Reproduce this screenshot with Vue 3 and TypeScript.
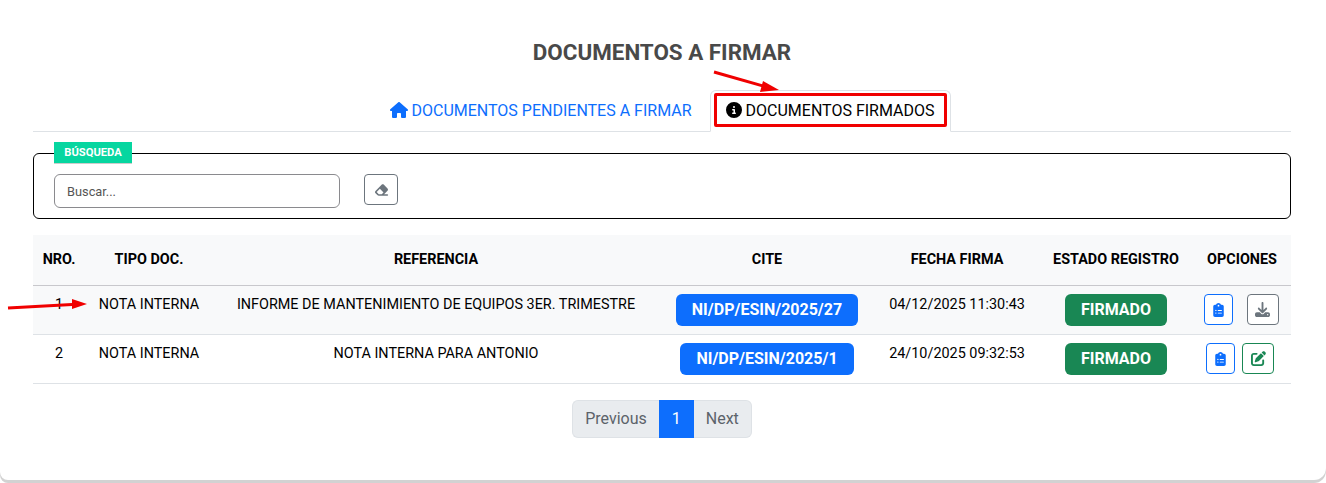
<template>
  <div class="page">
    <main class="card">
      <h1 class="title">DOCUMENTOS A FIRMAR</h1>

      <nav class="tabs">
        <a class="tab">
          <svg class="tab-icon" viewBox="0 0 576 512"><path fill="currentColor" d="M575.8 255.5c0 18-15 32.1-32 32.1h-32l.7 160.2c0 2.7-.2 5.4-.5 8.1V472c0 22.1-17.9 40-40 40H456c-1.1 0-2.2 0-3.3-.1c-1.4 .1-2.8 .1-4.2 .1H416 392c-22.1 0-40-17.9-40-40V448 384c0-17.7-14.3-32-32-32H256c-17.7 0-32 14.3-32 32v64 24c0 22.1-17.9 40-40 40H160 128.1c-1.5 0-3-.1-4.5-.2c-1.2 .1-2.4 .2-3.6 .2H104c-22.1 0-40-17.9-40-40V360c0-.9 0-1.9 .1-2.8V287.6H32c-18 0-32-14-32-32.1c0-9 3-17 10-24L266.4 8c7-7 15-8 22-8s15 2 21 7L564.8 231.5c8 7 12 15 11 24z" /></svg>
          DOCUMENTOS PENDIENTES A FIRMAR
        </a>
        <a class="tab active">
          <span class="tab-mark">
            <svg class="tab-icon info" viewBox="0 0 512 512"><path fill="currentColor" d="M256 512A256 256 0 1 0 256 0a256 256 0 1 0 0 512zM216 336h24V272H216c-13.300 0-24-10.700-24-24s10.700-24 24-24h48c13.300 0 24 10.700 24 24v88h8c13.300 0 24 10.700 24 24s-10.700 24-24 24H216c-13.300 0-24-10.700-24-24s10.700-24 24-24zm40-208a32 32 0 1 1 0 64 32 32 0 1 1 0-64z" /></svg>
            DOCUMENTOS FIRMADOS
          </span>
        </a>
      </nav>

      <fieldset class="search">
        <legend class="search-label">BÚSQUEDA</legend>
        <input class="search-input" type="text" placeholder="Buscar..." />
        <button class="btn btn-clear" type="button">
          <svg viewBox="0 0 576 512" width="15" height="14"><path fill="currentColor" d="M290.700 57.400L57.400 290.700c-25 25-25 65.500 0 90.500l80 80c12 12 28.300 18.700 45.300 18.700H288h9.400H512c17.700 0 32-14.300 32-32s-14.300-32-32-32H387.900L518.600 285.300c25-25 25-65.500 0-90.500L381.300 57.400c-25-25-65.500-25-90.500 0zM297.400 416H288l-105.400 0-80-80L227.300 211.300 364.700 348.700 297.400 416z" /></svg>
        </button>
      </fieldset>

      <table class="docs">
        <colgroup>
          <col v-for="w in colWidths" :key="w" :style="{ width: w + 'px' }" />
        </colgroup>
        <thead>
          <tr>
            <th>NRO.</th>
            <th>TIPO DOC.</th>
            <th>REFERENCIA</th>
            <th>CITE</th>
            <th>FECHA FIRMA</th>
            <th>ESTADO REGISTRO</th>
            <th>OPCIONES</th>
          </tr>
        </thead>
        <tbody>
          <tr v-for="row in rows" :key="row.nro">
            <td>{{ row.nro }}</td>
            <td>{{ row.tipo }}</td>
            <td>{{ row.referencia }}</td>
            <td class="mid"><span class="badge badge-blue">{{ row.cite }}</span></td>
            <td>{{ row.fecha }}</td>
            <td class="mid"><span class="badge badge-green">FIRMADO</span></td>
            <td class="mid">
              <div class="actions" :class="{ wide: row.download }">
                <button class="btn btn-blue" type="button">
                  <svg viewBox="0 0 384 512" width="11" height="14"><path fill="currentColor" d="M192 0c-41.800 0-77.400 26.700-90.500 64H64C28.700 64 0 92.700 0 128V448c0 35.300 28.700 64 64 64H320c35.300 0 64-28.700 64-64V128c0-35.300-28.700-64-64-64H282.500C269.400 26.700 233.800 0 192 0zm0 64a32 32 0 1 1 0 64 32 32 0 1 1 0-64zM72 272a24 24 0 1 1 48 0 24 24 0 1 1-48 0zm104-16H304c8.800 0 16 7.200 16 16s-7.200 16-16 16H176c-8.800 0-16-7.200-16-16s7.200-16 16-16zM72 368a24 24 0 1 1 48 0 24 24 0 1 1-48 0zm88 0c0-8.800 7.200-16 16-16H304c8.800 0 16 7.200 16 16s-7.200 16-16 16H176c-8.800 0-16-7.200-16-16z" /></svg>
                </button>
                <button v-if="row.download" class="btn btn-gray" type="button">
                  <svg viewBox="0 0 512 512" width="15" height="15"><path fill="currentColor" d="M288 32c0-17.700-14.300-32-32-32s-32 14.300-32 32V274.700l-73.400-73.400c-12.500-12.500-32.800-12.500-45.300 0s-12.500 32.800 0 45.300l128 128c12.500 12.500 32.800 12.500 45.300 0l128-128c12.500-12.500 12.500-32.800 0-45.300s-32.800-12.500-45.300 0L288 274.700V32zM64 352c-35.300 0-64 28.700-64 64v32c0 35.300 28.700 64 64 64H448c35.300 0 64-28.700 64-64V416c0-35.300-28.700-64-64-64H346.500l-45.300 45.300c-25 25-65.500 25-90.500 0L165.500 352H64zm368 56a24 24 0 1 1 0 48 24 24 0 1 1 0-48z" /></svg>
                </button>
                <button v-else class="btn btn-green" type="button">
                  <svg viewBox="0 0 512 512" width="15" height="15"><path fill="currentColor" d="M471.600 21.700c-21.900-21.900-57.300-21.900-79.200 0L362.300 51.700l97.900 97.900 30.100-30.100c21.900-21.900 21.900-57.300 0-79.200L471.600 21.700zm-299.200 220c-6.100 6.100-10.800 13.600-13.500 21.900l-29.600 88.800c-2.900 8.600-.6 18.100 5.800 24.600s15.900 8.700 24.600 5.800l88.800-29.600c8.200-2.700 15.700-7.400 21.900-13.500L437.700 172.300 339.700 74.300 172.400 241.700zM96 64C43 64 0 107 0 160V416c0 53 43 96 96 96H352c53 0 96-43 96-96V320c0-17.700-14.300-32-32-32s-32 14.300-32 32v96c0 17.700-14.300 32-32 32H96c-17.700 0-32-14.300-32-32V160c0-17.700 14.300-32 32-32h96c17.700 0 32-14.300 32-32s-14.300-32-32-32H96z" /></svg>
                </button>
              </div>
            </td>
          </tr>
        </tbody>
      </table>

      <ul class="pager">
        <li class="page-item">Previous</li>
        <li class="page-item current">1</li>
        <li class="page-item">Next</li>
      </ul>

      <!-- flechas rojas de la captura -->
      <svg class="arrow arrow-tab" width="90" height="30" viewBox="0 0 90 30">
        <path d="M9 4 L60 18.500" stroke="#f00000" stroke-width="3" fill="none" />
        <path d="M74 22 L58 13 L55 24 Z" fill="#f00000" />
      </svg>
      <svg class="arrow arrow-row" width="90" height="20" viewBox="0 0 90 20">
        <path d="M8 12 L72 8.500" stroke="#f00000" stroke-width="3" fill="none" />
        <path d="M87 8 L72 3 L72 13 Z" fill="#f00000" />
      </svg>
    </main>
  </div>
</template>

<script setup lang="ts">
interface DocRow {
  nro: number
  tipo: string
  referencia: string
  cite: string
  fecha: string
  download: boolean
}

const colWidths = [52, 128, 446, 216, 164, 154, 98]

const rows: DocRow[] = [
  {
    nro: 1,
    tipo: 'NOTA INTERNA',
    referencia: 'INFORME DE MANTENIMIENTO DE EQUIPOS 3ER. TRIMESTRE',
    cite: 'NI/DP/ESIN/2025/27',
    fecha: '04/12/2025 11:30:43',
    download: true
  },
  {
    nro: 2,
    tipo: 'NOTA INTERNA',
    referencia: 'NOTA INTERNA PARA ANTONIO',
    cite: 'NI/DP/ESIN/2025/1',
    fecha: '24/10/2025 09:32:53',
    download: false
  }
]
</script>

<style>
html,
body {
  margin: 0;
  background: #fff;
}
</style>

<style scoped>
.page {
  width: 1326px;
  height: 483px;
  overflow: hidden;
  font-family: Roboto, "Liberation Sans", sans-serif;
  color: #000;
}

.card {
  position: relative;
  box-sizing: border-box;
  width: 1326px;
  height: 480px;
  padding: 39px 35px 0 33px;
  background: #fff;
  border-radius: 0 0 12px 8px;
  box-shadow: 0 3px 0 #d2d2d2;
}

.title {
  margin: 0 0 24px;
  height: 27px;
  font-size: 22.400px;
  line-height: 27px;
  font-weight: 700;
  text-align: center;
  color: #494949;
}

.tabs {
  display: flex;
  justify-content: center;
  height: 41px;
  padding-right: 1px;
  border-bottom: 1px solid #dee2e6;
}

.tab {
  display: flex;
  align-items: center;
  gap: 3px;
  box-sizing: border-box;
  height: 42px;
  padding: 0 17px 2px;
  font-size: 16px;
  color: #0d6efd;
  border: 1px solid transparent;
  border-radius: 6px 6px 0 0;
}

.tab.active {
  padding: 0 3px 2px;
  color: #000;
  background: #fff;
  border-color: #dee2e6 #dee2e6 #fff;
}

.tab-mark {
  display: flex;
  align-items: center;
  gap: 4px;
  padding: 0 9px 0 9px;
  height: 28px;
  border: 3px solid #f00000;
  border-radius: 2px;
}

.tab-icon {
  width: 18px;
  height: 16px;
}

.tab-icon.info {
  width: 16px;
}

.search {
  display: flex;
  align-items: flex-start;
  gap: 24px;
  box-sizing: border-box;
  height: 66px;
  margin: 21px 0 16px;
  padding: 20px 20px 0;
  border: 1px solid #000;
  border-radius: 6px;
  position: relative;
}

.search-label {
  position: absolute;
  top: -12px;
  left: 20px;
  box-sizing: border-box;
  width: 78px;
  height: 22px;
  padding: 0;
  font-size: 11.200px;
  line-height: 21px;
  font-weight: 700;
  text-align: center;
  color: #fff;
  background: #06d6a0;
  border-bottom: 1px solid #ccc;
}

.search-input {
  box-sizing: border-box;
  width: 286px;
  height: 34px;
  padding: 0 12px;
  font: 12.800px Roboto, sans-serif;
  border: 1px solid #8a8a8e;
  border-radius: 6px;
  outline: none;
}

.search-input::placeholder {
  color: #555;
  opacity: 1;
}

.btn {
  display: flex;
  align-items: center;
  justify-content: center;
  box-sizing: border-box;
  height: 31px;
  padding: 0;
  background: #fff;
  border: 1px solid;
  border-radius: 4px;
}

.btn-clear {
  width: 34px;
  color: #6c757d;
}

.btn-blue {
  width: 29px;
  color: #0d6efd;
}

.btn-gray {
  width: 32px;
  color: #6c757d;
}

.btn-green {
  width: 32px;
  color: #198754;
}

.docs {
  width: 1258px;
  table-layout: fixed;
  border-collapse: collapse;
}

.docs th {
  height: 50px;
  padding: 0;
  box-sizing: border-box;
  font-size: 14.400px;
  font-weight: 700;
  background: #f8f9fa;
  border-bottom: 1px solid #c8c8cc;
}

.docs td {
  height: 49px;
  padding: 0 0 11px;
  box-sizing: border-box;
  text-align: center;
  font-size: 14.400px;
  border-bottom: 1px solid #dee2e6;
}

.docs td.mid {
  padding: 0;
  vertical-align: middle;
}

.docs tbody tr:first-child {
  background: #f8f9fa;
}

.badge {
  display: inline-block;
  padding: 0 16px;
  height: 32px;
  line-height: 32px;
  font-size: 16px;
  font-weight: 700;
  color: #fff;
  border-radius: 6px;
}

.badge-blue {
  background: #0d6efd;
}

.badge-green {
  background: #198754;
}

.actions {
  display: flex;
  justify-content: center;
  gap: 7px;
  padding-right: 4px;
}

.actions.wide {
  gap: 14px;
  padding-right: 2px;
}

.pager {
  display: flex;
  justify-content: center;
  list-style: none;
  margin: 16px 0 0;
  padding: 0;
}

.page-item {
  box-sizing: border-box;
  height: 38px;
  line-height: 36px;
  padding: 0 12px;
  font-size: 16px;
  color: #5c636a;
  background: #e9ecef;
  border: 1px solid #dee2e6;
}

.page-item:first-child {
  border-radius: 6px 0 0 6px;
  border-right: 0;
}

.page-item:last-child {
  border-radius: 0 6px 6px 0;
  border-left: 0;
}

.page-item.current {
  color: #fff;
  background: #0d6efd;
  border-color: #0d6efd;
}

.arrow {
  position: absolute;
}

.arrow-tab {
  left: 705px;
  top: 68px;
}

.arrow-row {
  left: 0;
  top: 296px;
}
</style>
